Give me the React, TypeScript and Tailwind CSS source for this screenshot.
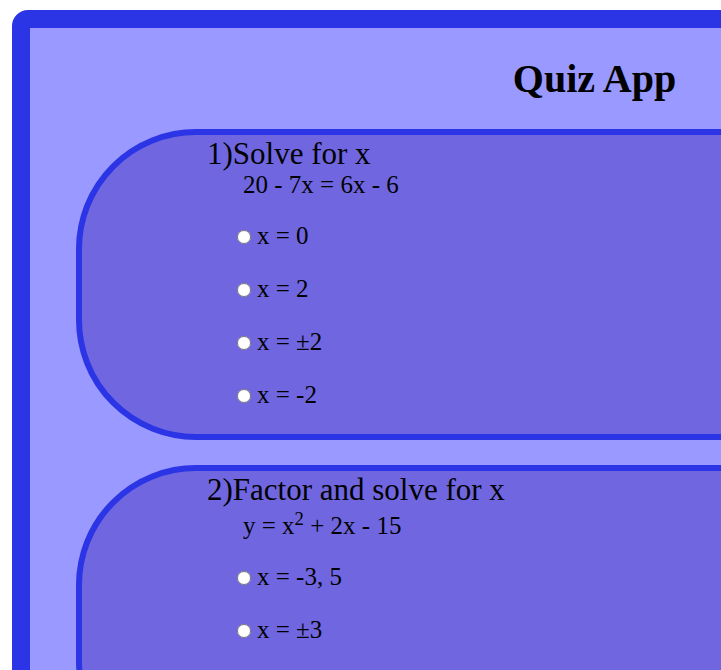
import React from "react";

const serif = { fontFamily: '"Liberation Serif", "Times New Roman", serif' };

function Option({ label }: { label: React.ReactNode }) {
  return (
    <label className="block text-[25px] leading-[28px] text-black">
      <input type="radio" name="x" className="ml-0 mr-[6px] h-[14px] w-[14px] align-baseline" />
      {label}
    </label>
  );
}

function Card({
  title,
  equation,
  options,
  eqPad,
}: {
  title: string;
  equation: React.ReactNode;
  options: React.ReactNode[];
  eqPad?: boolean;
}) {
  return (
    <div className="ml-[46px] w-[1037px] rounded-l-[120px] border-[6px] border-[#2c35e6] bg-[#7067e0] pl-[125px] pt-[2px] pb-[25px]">
      <div className="text-[31px] leading-[34px] text-black">{title}</div>
      <div className={`pl-[36px] text-[25px] leading-[28px] text-black ${eqPad ? "pt-[5px]" : ""}`}>{equation}</div>
      <div className="mt-[23px] flex flex-col gap-[25px] pl-[30px]">
        {options.map((o, i) => (
          <Option key={i} label={o} />
        ))}
      </div>
    </div>
  );
}

export default function App() {
  return (
    <div className="h-[670px] w-[721px] overflow-hidden bg-white" style={serif}>
      <div className="ml-[12px] mt-[10px] h-[1200px] w-[1165px] rounded-tl-[16px] border-[18px] border-[#2c35e6] bg-[#9999ff]">
        <h1 className="pt-[29px] text-center text-[40px] font-bold leading-[44px] text-black">Quiz App</h1>
        <div className="mt-[28px] flex flex-col gap-[25px]">
          <Card
            title="1)Solve for x"
            equation="20 - 7x = 6x - 6"
            options={["x = 0", "x = 2", "x = ±2", "x = -2"]}
          />
          <Card
            title="2)Factor and solve for x"
            eqPad
            equation={
              <>
                y = x<sup>2</sup> + 2x - 15
              </>
            }
            options={["x = -3, 5", "x = ±3", "x = 3, -5", "x = -3"]}
          />
        </div>
      </div>
    </div>
  );
}
